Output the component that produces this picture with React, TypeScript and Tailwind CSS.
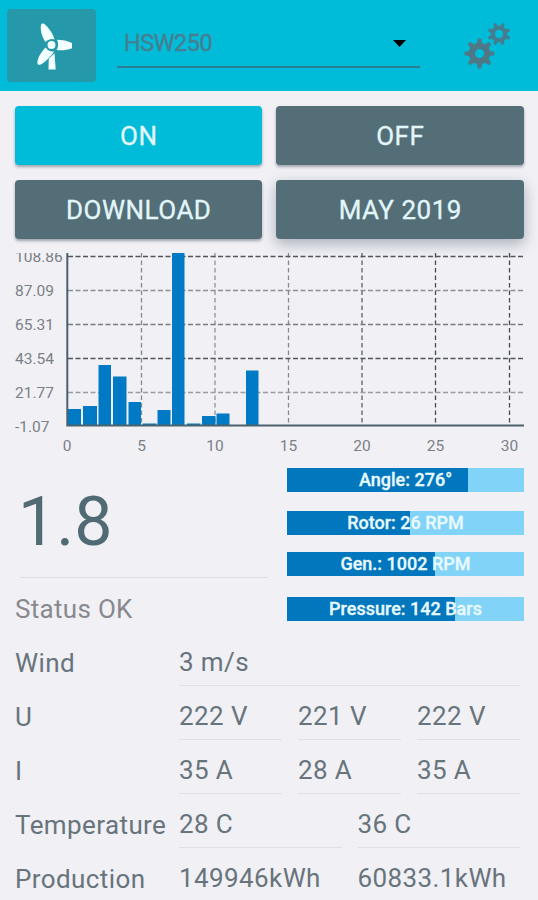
import React from "react";

function gearPath(cx: number, cy: number, outer: number, inner: number, hole: number, teeth: number, offset: number) {
  const step = (Math.PI * 2) / teeth;
  const points: string[] = [];
  for (let i = 0; i < teeth; i++) {
    const mid = i * step + offset;
    const corners: [number, number][] = [
      [inner, -0.3],
      [outer, -0.15],
      [outer, 0.15],
      [inner, 0.3],
    ];
    for (const [r, t] of corners) {
      const a = mid + t * step;
      points.push(`${(cx + r * Math.cos(a)).toFixed(2)} ${(cy + r * Math.sin(a)).toFixed(2)}`);
    }
  }
  return `M${points.join("L")}ZM${cx - hole} ${cy}a${hole} ${hole} 0 1 0 ${hole * 2} 0a${hole} ${hole} 0 1 0 ${-hole * 2} 0Z`;
}

function GearsIcon() {
  return (
    <svg className="h-[48px] w-[48px]" viewBox="463 22 48 48" fillRule="evenodd">
      <path fill="#4e7886" d={gearPath(479.5, 53.5, 15, 10.8, 4.6, 8, Math.PI / 2)} />
      <path fill="#447d8e" d={gearPath(499, 34, 11.5, 8.3, 4, 8, Math.PI / 8)} />
    </svg>
  );
}

function TurbineIcon() {
  return (
    <svg className="h-[50px] w-[40px]" viewBox="31.500 20 40 50">
      <g fill="#f4ffff">
        <path d="M45 41C40.800 35 39.500 27 40.600 24c.7-2 2.600-1.800 4.200-.3 4.200 4 8.200 10 9.200 14.800-3.500-.7-7 .3-9 2.500Z" />
        <path d="M56.500 38.800c6 0 13.500 1.700 16.800 4.400 1.500 1.200 1.200 2.600-.3 3.400-5 2.400-11.500 3.200-17 2.400 2-3 2.200-6.900.5-10.200Z" />
        <path d="M45.200 46.500c1.800 2.800 5 4.300 8.300 3.900-3 5-8.500 10.300-12.800 12.800-2 1.200-3.700.8-3.800-1.300-.1-4.800 4.300-11.900 8.300-15.400Z" />
        <path d="M48.300 57.700 54 52.300l1.200 16.200h-7.200Z" />
      </g>
      <circle cx="51" cy="44" r="4.800" fill="#f4ffff" stroke="#2599a9" strokeWidth="1.700" />
    </svg>
  );
}

const buttons = [
  { label: "ON", style: "bg-[#00bcd9] shadow-[0_2px_3px_rgba(60,70,85,0.45)]" },
  { label: "OFF", style: "bg-[#546e78] shadow-[0_2px_3px_rgba(60,70,85,0.45)]" },
  { label: "DOWNLOAD", style: "bg-[#546e78] shadow-[0_2px_3px_rgba(60,70,85,0.45)]" },
  { label: "MAY 2019", style: "bg-[#546e78] shadow-[0_5px_14px_rgba(70,80,100,0.4)]" },
];

const bars = [
  { x: 68, w: 13, y: 409 },
  { x: 83, w: 14, y: 406 },
  { x: 98.5, w: 12.5, y: 365 },
  { x: 113, w: 13.5, y: 376.5 },
  { x: 128.5, w: 12.5, y: 402 },
  { x: 142.5, w: 14, y: 423.5 },
  { x: 157.5, w: 13, y: 410 },
  { x: 172, w: 12.5, y: 253 },
  { x: 187, w: 13.5, y: 423.5 },
  { x: 202, w: 13.5, y: 416 },
  { x: 216.5, w: 13, y: 413.5 },
  { x: 246, w: 12.5, y: 370.5 },
];

const gridRows = [
  { y: 256.5, label: "108.86", color: "#50565c" },
  { y: 290.5, label: "87.09", color: "#8c8f94" },
  { y: 324.5, label: "65.31", color: "#777b80" },
  { y: 358.5, label: "43.54", color: "#50565c" },
  { y: 392.5, label: "21.77", color: "#999ca0" },
];

const gridColumns = [
  { x: 67, label: "0", color: "none" },
  { x: 141.5, label: "5", color: "#85888d" },
  { x: 215, label: "10", color: "#909397" },
  { x: 288.5, label: "15", color: "#85888d" },
  { x: 362, label: "20", color: "#5a5f65" },
  { x: 435.5, label: "25", color: "#454b51" },
  { x: 509.5, label: "30", color: "#454b51" },
];

function Chart() {
  return (
    <svg className="block h-[206px] w-full shrink-0" viewBox="0 253 538 206">
      {gridColumns.map((c) => (
        <line key={c.label} x1={c.x} x2={c.x} y1="253" y2="425" stroke={c.color} strokeWidth="1.300" strokeDasharray="4.500 3" />
      ))}
      {gridRows.map((r) => (
        <line key={r.label} x1="68" x2="524" y1={r.y} y2={r.y} stroke={r.color} strokeWidth="1.300" strokeDasharray="5 2.500" />
      ))}
      {bars.map((b) => (
        <rect key={b.x} x={b.x} y={b.y} width={b.w} height={425 - b.y} fill="#007ac4" />
      ))}
      <path d="M67.300 253v172.500H524" fill="none" stroke="#4b626c" strokeWidth="2" />
      <g fill="#7b8085" fontSize="15.500">
        {gridRows.map((r) => (
          <text key={r.label} x="15" y={r.y + 5.5}>{r.label}</text>
        ))}
        <text x="15" y="432">-1.07</text>
        <g textAnchor="middle">
          {gridColumns.map((c) => (
            <text key={c.label} x={c.x} y="451">{c.label}</text>
          ))}
        </g>
      </g>
    </svg>
  );
}

const gauges = [
  { label: "Angle: 276°", fill: 181, gap: "mb-[19px]" },
  { label: "Rotor: 26 RPM", fill: 123, gap: "mb-[17px]" },
  { label: "Gen.: 1002 RPM", fill: 148, gap: "mb-[21px]" },
  { label: "Pressure: 142 Bars", fill: 168, gap: "" },
];

const readings = [
  { label: "Wind", values: ["3 m/s"] },
  { label: "U", values: ["222 V", "221 V", "222 V"] },
  { label: "I", values: ["35 A", "28 A", "35 A"] },
  { label: "Temperature", values: ["28 C", "36 C"] },
  { label: "Production", values: ["149946kWh", "60833.1kWh"] },
];

export default function App() {
  return (
    <main className="flex h-[900px] w-[538px] flex-col overflow-hidden bg-[#f0f0f5] font-['Roboto',sans-serif] text-[#68747c]">
      <header className="flex h-[91px] shrink-0 bg-[#00bcd9]">
        <button className="mt-[9px] ml-[7px] flex h-[73px] w-[89px] items-center justify-center rounded-[4px] bg-[#2599a9]">
          <TurbineIcon />
        </button>
        <div className="mt-[21px] ml-[21px] flex h-[47px] w-[303px] items-center justify-between border-b-2 border-[#2a7f92] pr-[14px] pb-px pl-[7px]">
          <span className="pt-[2px] text-[23.5px] tracking-[-0.5px] text-[#467f91] [-webkit-text-stroke:0.4px_#467f91]">HSW250</span>
          <svg className="h-[7px] w-[13px]" viewBox="0 0 13 7"><path d="M0 0h13L6.500 7Z" /></svg>
        </div>
        <div className="mt-[22px] ml-[43px]"><GearsIcon /></div>
      </header>
      <section className="grid h-[162px] shrink-0 grid-cols-2 content-start gap-x-[14px] gap-y-[15px] px-[14.5px] pt-[15px]">
        {buttons.map((b) => (
          <button key={b.label} className={`h-[59px] rounded-[4px] pt-[2px] pl-px text-[26px] tracking-[0.5px] text-[#e3f6fa] [-webkit-text-stroke:0.3px_#e3f6fa] ${b.style}`}>
            {b.label}
          </button>
        ))}
      </section>
      <Chart />
      <section className="flex h-[176px] shrink-0 justify-between pr-[14px]">
        <div className="w-[268px]">
          <div className="ml-[20px] h-[119px] border-b border-[#dcdde1] pt-[23px] text-[68px] leading-[80px] text-[#506b74]">
            <span className="-ml-[2px]">1.8</span>
          </div>
          <div className="pt-[15px] pl-[15px] text-[26px] leading-[32px] tracking-[0.3px] text-[#88898e]">Status OK</div>
        </div>
        <div className="w-[237px] pt-[9px]">
          {gauges.map((g) => (
            <div key={g.label} className={`relative h-6 bg-[#81d3f8] ${g.gap}`}>
              <div className="h-full bg-[#0277bd]" style={{ width: g.fill }} />
              <span className="absolute inset-0 text-center text-[18px] leading-[24px] font-medium text-[#e9faff] [-webkit-text-stroke:0.3px_#e9faff]">{g.label}</span>
            </div>
          ))}
        </div>
      </section>
      <section className="shrink-0">
        {readings.map((r) => (
          <div key={r.label} className="flex h-[54px] pl-[15px] text-[26px] leading-[32px] tracking-[0.4px]">
            <div className="w-[164px] shrink-0 pt-[12px]">{r.label}</div>
            <div className="flex w-[357px]">
              {r.values.map((v, i) => (
                <div key={i} className="flex-1 pr-[16px]">
                  <div className="h-[51px] border-b border-[#dfe0e4] pt-[11px] whitespace-nowrap">{v}</div>
                </div>
              ))}
            </div>
          </div>
        ))}
      </section>
    </main>
  );
}
